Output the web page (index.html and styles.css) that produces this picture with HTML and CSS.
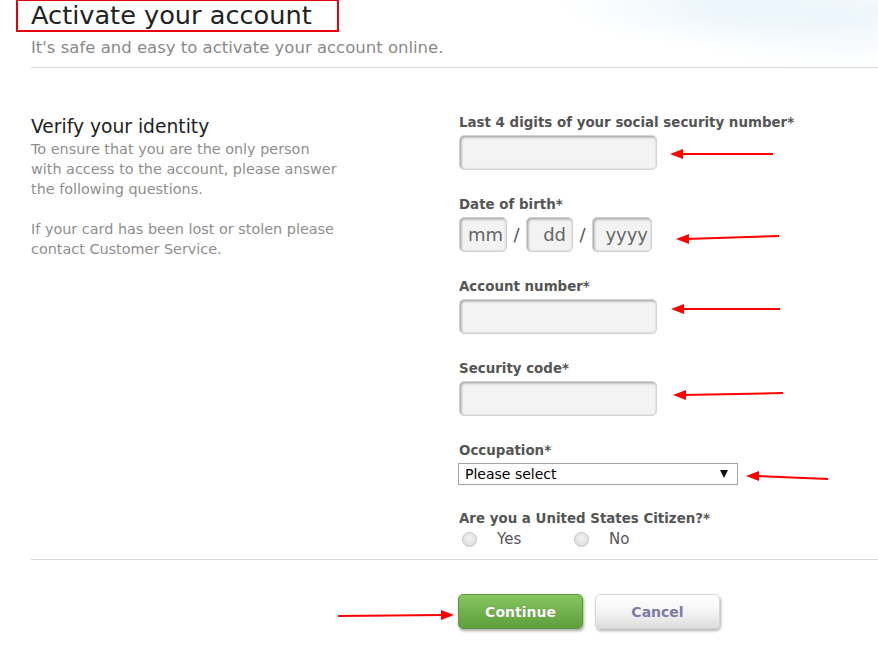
FILE: index.html
```html
<!DOCTYPE html>
<html lang="en">
<head>
<meta charset="utf-8">
<title>Activate your account</title>
<link rel="stylesheet" href="styles.css">
</head>
<body>
<div class="page">
  <header class="head">
    <div class="title-box"><h1 class="title">Activate your account</h1></div>
    <p class="subtitle">It's safe and easy to activate your account online.</p>
  </header>
  <main class="main">
    <section class="intro">
      <h2 class="intro-title">Verify your identity</h2>
      <p class="intro-text">To ensure that you are the only person with access to the account, please answer the following questions.</p>
      <p class="intro-text">If your card has been lost or stolen please contact Customer Service.</p>
    </section>
    <form class="form">
      <div class="field">
        <label class="label">Last 4 digits of your social security number*</label>
        <input class="input input-wide" type="text">
      </div>
      <div class="field">
        <label class="label">Date of birth*</label>
        <div class="dob">
          <input class="input input-mm" type="text" placeholder="mm">
          <span class="slash">/</span>
          <input class="input input-dd" type="text" placeholder="dd">
          <span class="slash">/</span>
          <input class="input input-yyyy" type="text" placeholder="yyyy">
        </div>
      </div>
      <div class="field">
        <label class="label">Account number*</label>
        <input class="input input-wide" type="text">
      </div>
      <div class="field">
        <label class="label">Security code*</label>
        <input class="input input-wide" type="text">
      </div>
      <div class="field field-select">
        <label class="label">Occupation*</label>
        <div class="select-wrap">
          <select class="select"><option>Please select</option></select>
        </div>
      </div>
      <div class="field field-radio">
        <label class="label">Are you a United States Citizen?*</label>
        <div class="radios">
          <label class="radio-opt"><input class="radio" type="radio" name="citizen"><span>Yes</span></label>
          <label class="radio-opt"><input class="radio" type="radio" name="citizen"><span>No</span></label>
        </div>
      </div>
    </form>
  </main>
  <div class="actions">
    <button class="btn btn-continue" type="button">Continue</button>
    <button class="btn btn-cancel" type="button">Cancel</button>
  </div>
</div>
<svg class="annotations" width="878" height="659" viewBox="0 0 878 659">
  <g stroke="#f00" stroke-width="2" fill="#f00">
    <line x1="773" y1="154" x2="680" y2="154"/>
    <polygon points="670,154 683,149 683,159" stroke="none"/>
    <line x1="779" y1="236" x2="686" y2="239"/>
    <polygon points="676,239 689,234 689,244" stroke="none"/>
    <line x1="780" y1="309" x2="681" y2="309"/>
    <polygon points="671,309 684,304 684,314" stroke="none"/>
    <line x1="783" y1="393" x2="683" y2="395"/>
    <polygon points="673,395 686,390 686,400" stroke="none"/>
    <line x1="828" y1="479" x2="756" y2="476"/>
    <polygon points="746,476 759,471 759,481" stroke="none"/>
    <line x1="338" y1="616" x2="444" y2="615"/>
    <polygon points="454,615 441,610 441,620" stroke="none"/>
  </g>
</svg>
</body>
</html>
```
FILE: styles.css
```css
* { box-sizing: border-box; }
html, body { margin: 0; padding: 0; }
body {
  width: 878px;
  height: 659px;
  overflow: hidden;
  position: relative;
  font-family: "DejaVu Sans", Verdana, sans-serif;
  background:
    radial-gradient(ellipse 170px 40px at 730px 6px, rgba(228,241,250,0.7), rgba(255,255,255,0) 100%),
    radial-gradient(ellipse 190px 50px at 850px 18px, rgba(230,242,250,0.65), rgba(255,255,255,0) 100%),
    #fff;
  color: #333;
}
.page { padding-left: 31px; }
.head { border-bottom: 1px solid #d9d9e2; padding-bottom: 9px; }
.title-box {
  margin-left: -15px;
  width: 323px;
  height: 32px;
  border: 2px solid #e8000b;
  border-top-width: 1px;
  padding-left: 13px;
  display: flex;
  align-items: flex-end;
}
.title {
  margin: 0;
  font-weight: normal;
  font-size: 25.6px;
  line-height: 30px;
  color: #222;
  white-space: nowrap;
}
.subtitle {
  margin: 6px 0 0;
  font-size: 16.5px;
  line-height: 20px;
  color: #8a8a8a;
  white-space: nowrap;
}
.main {
  display: grid;
  grid-template-columns: 428px 1fr;
  padding-top: 47px;
}
.intro-title {
  margin: 0;
  font-size: 18.7px;
  line-height: 24px;
  font-weight: normal;
  color: #222;
}
.intro-text {
  margin: 0 0 20px;
  font-size: 14.4px;
  line-height: 20px;
  color: #8e8e8e;
  width: 306px;
}
.form { display: flex; flex-direction: column; }
.field { display: flex; flex-direction: column; height: 82px; }
.label {
  font-weight: bold;
  font-size: 13.4px;
  line-height: 18px;
  color: #555;
  margin-bottom: 3px;
  margin-top: -1px;
}
.input {
  height: 35px;
  border: 1px solid #d2d2d2;
  border-radius: 5px;
  background: #f3f3f3;
  box-shadow: inset 1px 1px 3px rgba(0,0,0,0.4);
  font-family: inherit;
  font-size: 18px;
  color: #666;
  padding: 0 3px;
  outline: none;
}
.input::placeholder { color: #666; }
.input-wide { width: 198px; }
.dob { display: flex; align-items: center; }
.input-mm { width: 48px; text-align: right; }
.input-dd { width: 47px; text-align: right; padding-right: 6px; }
.input-yyyy { width: 60px; text-align: right; }
.slash { font-size: 18px; color: #555; width: 19px; text-align: center; }
.field-select { height: 68px; }
.select-wrap { position: relative; width: 280px; margin-left: -1px; }
.select {
  -webkit-appearance: none;
  appearance: none;
  width: 280px;
  height: 22px;
  border: 1px solid #a6a6a6;
  border-radius: 0;
  background: #fff;
  font-family: "DejaVu Sans", Verdana, sans-serif;
  font-size: 14px;
  color: #000;
  padding: 0 0 0 6px;
}
.select-wrap::after {
  content: "";
  position: absolute;
  right: 10px;
  top: 7px;
  border-left: 4px solid transparent;
  border-right: 4px solid transparent;
  border-top: 8px solid #111;
}
.field-radio { height: 48px; }
.radios { display: flex; margin-top: -1px; }
.radio-opt { display: flex; align-items: center; width: 112px; font-size: 15px; color: #555; }
.radio {
  -webkit-appearance: none;
  appearance: none;
  width: 15px;
  height: 15px;
  margin: 0 20px 0 3px;
  border-radius: 50%;
  border: 1px solid #c4c4c4;
  background: radial-gradient(circle at 50% 40%, #f4f4f4, #d6d6d6);
}
.actions {
  border-top: 1px solid #d9d9e2;
  padding: 34px 0 0 427px;
  display: flex;
  gap: 12px;
}
.btn {
  width: 125px;
  height: 35px;
  border-radius: 5px;
  font-family: "DejaVu Sans", Verdana, sans-serif;
  font-weight: bold;
  font-size: 14px;
  cursor: pointer;
}
.btn-continue {
  border: 1px solid #5b9a3c;
  background: linear-gradient(#86c560, #5e9f3b);
  color: #fff;
  box-shadow: 1px 2px 3px rgba(0,0,0,0.35);
  text-shadow: 0 0 1px rgba(0,0,0,0.3);
}
.btn-cancel {
  border: 1px solid #d6d6d6;
  background: linear-gradient(#ffffff, #f3f3f3 55%, #dcdcdc);
  color: #7d7aa3;
  box-shadow: 1px 2px 3px rgba(0,0,0,0.3);
}
.annotations { position: absolute; left: 0; top: 0; pointer-events: none; }
```
